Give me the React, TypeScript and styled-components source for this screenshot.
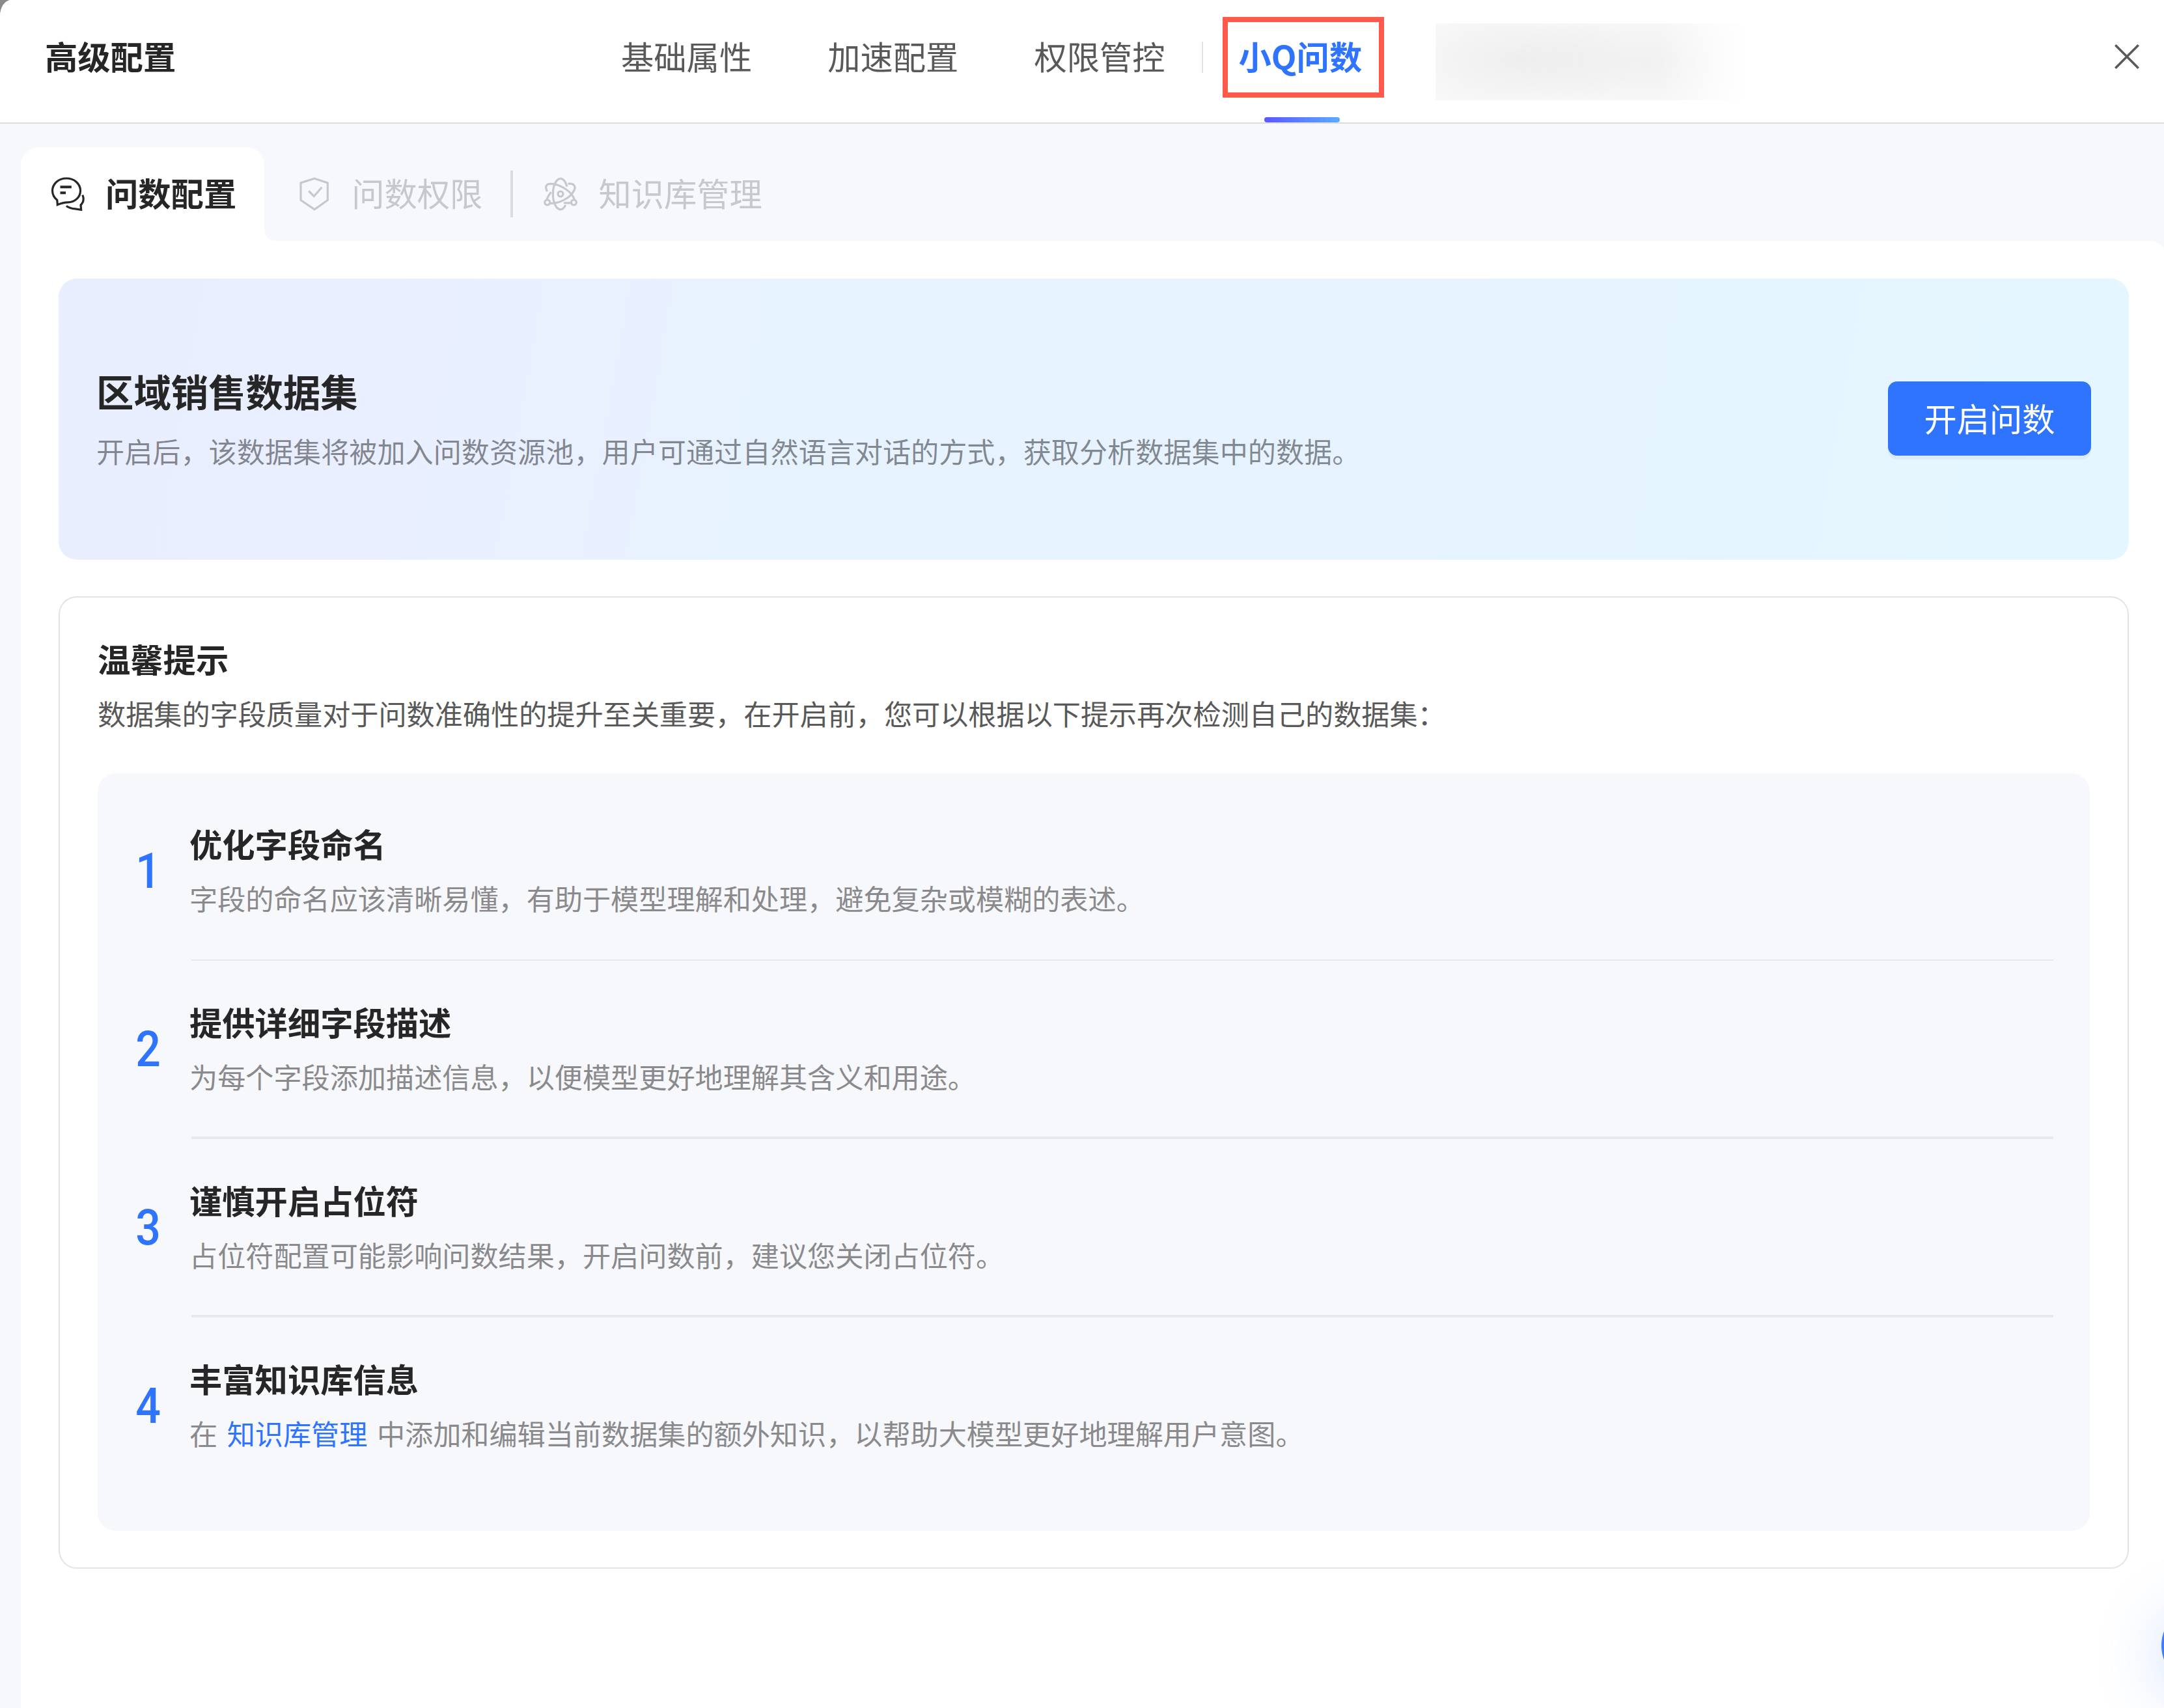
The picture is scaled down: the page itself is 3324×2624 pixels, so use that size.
import { ReactNode, useState } from 'react';
import styled, { createGlobalStyle } from 'styled-components';

const GlobalStyle = createGlobalStyle`
  * {
    box-sizing: border-box;
  }
  body {
    margin: 0;
    background: #8a8a8a;
    color: #262626;
    font-family: 'Noto Sans CJK SC', 'Noto Sans', sans-serif;
    font-size: 50.3px;
    line-height: 70px;
  }
`;

const Drawer = styled.div`
  display: flex;
  flex-direction: column;
  height: 2624px;
  overflow: hidden;
  background: #f7f8fc;
  border-top-left-radius: 17px 25px;
`;

const Header = styled.header`
  display: flex;
  align-items: center;
  flex: none;
  height: 190px;
  padding: 0 38px 18px 69px;
  background: #fff;
  border-bottom: 2px solid #dcdcde;
`;

const Title = styled.h1`
  margin: 0;
  width: 200px;
  font-size: 50.3px;
  font-weight: 600;
  white-space: nowrap;
`;

const Nav = styled.nav`
  display: flex;
  align-items: center;
  gap: 116px;
  margin-left: 685px;
`;

const NavItem = styled.a<{ $active?: boolean }>`
  position: relative;
  display: flex;
  align-items: center;
  height: 170px;
  white-space: nowrap;
  cursor: pointer;
  color: ${({ $active }) => ($active ? '#2e74ff' : '#595959')};
  font-weight: ${({ $active }) => ($active ? 600 : 400)};
  ${({ $active }) =>
    $active &&
    `
    width: 188px;
    &::after {
      content: '';
      position: absolute;
      left: 39px;
      top: 180px;
      width: 116px;
      height: 8px;
      border-radius: 4px;
      background: linear-gradient(90deg, #5b57ff, #5aabff);
    }
  `}
`;

const NavDivider = styled.span`
  width: 2px;
  height: 48px;
  margin: 6px 55px 0 56px;
  background: #e1e1e3;
`;

const Highlight = styled.span`
  position: absolute;
  left: -25px;
  top: 26px;
  width: 248px;
  height: 124px;
  border: 8px solid #ff5a4c;
`;

const Masked = styled.div`
  width: 479px;
  height: 118px;
  margin: 20px 0 0 114px;
  background:
    linear-gradient(90deg, rgba(255, 255, 255, 0) 72%, #fff 100%),
    radial-gradient(ellipse 190px 90px at 120px 56px, rgba(0, 0, 0, 0.045), rgba(0, 0, 0, 0)),
    radial-gradient(ellipse 210px 90px at 320px 58px, rgba(0, 0, 0, 0.035), rgba(0, 0, 0, 0)),
    #f9f9f9;
`;

const Close = styled.button`
  display: flex;
  margin: 4px 0 0 auto;
  padding: 0;
  border: 0;
  background: none;
  cursor: pointer;
`;

const SubTabs = styled.div`
  display: flex;
  flex: none;
  height: 180px;
  padding: 36px 0 0 32px;
`;

const SubTab = styled.div<{ $active?: boolean }>`
  position: relative;
  display: flex;
  align-items: center;
  gap: 32px;
  height: 144px;
  padding: 0 43px 7px 50px;
  white-space: nowrap;
  color: #c6c8cd;
  svg {
    flex: none;
    margin-top: 6px;
  }
  ${({ $active }) =>
    $active &&
    `
    padding-left: 46px;
    color: #262626;
    font-weight: 600;
    background: #fff;
    border-radius: 28px 28px 0 0;
    &::after {
      content: '';
      position: absolute;
      right: -16px;
      bottom: 0;
      width: 16px;
      height: 16px;
      background: radial-gradient(circle at 100% 0, transparent 15.5px, #fff 16px);
    }
  `}
`;

const SubTabDivider = styled.span`
  width: 4px;
  height: 72px;
  margin: 36px -3px 0 0;
  background: #dbdcdf;
`;

const Panel = styled.main`
  flex: 1;
  margin-left: 32px;
  padding: 58px 54px 0 58px;
  background: #fff;
  border-top-right-radius: 24px 16px;
`;

const Banner = styled.section`
  display: flex;
  align-items: center;
  justify-content: space-between;
  height: 432px;
  padding: 0 58px;
  border-radius: 28px;
  background: linear-gradient(100deg, #e9eeff 0%, #e9f0ff 26%, #e7f2ff 34%, #e6f3ff 65%, #e4f5ff 85%, #e4f6ff 100%);
`;

const BannerText = styled.div`
  padding-bottom: 4px;
`;

const BannerTitle = styled.h2`
  margin: 0 0 20px;
  font-size: 57.4px;
  line-height: 80px;
  font-weight: 600;
`;

const BannerDesc = styled.p`
  margin: 0;
  font-size: 43.15px;
  line-height: 64px;
  color: rgba(0, 0, 0, 0.45);
`;

const StartButton = styled.button`
  width: 312px;
  height: 114px;
  margin-bottom: 2px;
  padding: 0 0 4px;
  border: 0;
  border-radius: 14px;
  background: #2e74ff;
  box-shadow: 0 6px 0 rgba(0, 0, 0, 0.04);
  color: #fff;
  font-family: inherit;
  font-size: 50.3px;
  line-height: 70px;
  cursor: pointer;
`;

const Card = styled.section`
  margin-top: 56px;
  padding: 58px 58px 56px;
  border: 2px solid #e3e3e3;
  border-radius: 28px;
`;

const CardTitle = styled.h3`
  margin: 0;
  font-size: 50.3px;
  font-weight: 600;
`;

const CardDesc = styled.p`
  margin: 19px 0 63px;
  font-size: 43.15px;
  line-height: 60px;
  color: #595959;
`;

const TipList = styled.div`
  height: 1164px;
  padding: 14px 56px 0 0;
  border-radius: 28px;
  background: #f7f8fc;
`;

const Tip = styled.div`
  display: flex;
  align-items: center;
  padding-top: 58px;
`;

const TipNumber = styled.span`
  width: 53px;
  margin: 4px 37px 0 51px;
  font-family: Roboto, sans-serif;
  font-size: 75.5px;
  font-weight: 500;
  line-height: 80px;
  text-align: center;
  color: #2e74ff;
  transform: scaleX(0.9);
`;

const TipTitle = styled.h4`
  margin: 0 0 19px;
  font-size: 50.3px;
  font-weight: 600;
`;

const TipDesc = styled.p`
  margin: 0 0 2px;
  font-size: 43.15px;
  line-height: 60px;
  color: #8a8a8c;
  a {
    margin: 0 14.5px;
    color: #2e74ff;
  }
`;

const TipDivider = styled.hr<{ $size: number }>`
  height: ${({ $size }) => $size}px;
  margin: ${({ $size }) => 65 - $size}px 0 0 144px;
  border: 0;
  background: #e6e8eb;
`;

const Assistant = styled.button`
  position: fixed;
  left: 3320px;
  top: 2466px;
  width: 124px;
  height: 124px;
  padding: 0;
  border: 0;
  border-radius: 50%;
  background: #3d7dff;
  box-shadow: 0 16px 100px rgba(46, 116, 255, 0.25);
`;

const Icon = ({ children }: { children: ReactNode }) => (
  <svg width='52' height='52' viewBox='0 0 52 52' fill='none' stroke='currentColor' strokeWidth='3.2'>
    {children}
  </svg>
);

const ChatIcon = () => (
  <Icon>
    <path d='M10.3 42.6L9.8 35.5C5 31.5 2.5 26.5 2.5 21C2.5 10.2 12 2 24 2S45.5 10.2 45.5 21C45.5 31 37 38.8 26 38.8C20.5 38.8 16 40 10.3 42.6Z' />
    <path d='M14.5 15.3H31.8M14.5 24.3H23' strokeWidth='4' />
    <path d='M48.8 27.5C51.5 34 50 39 46 43L46.6 50.3L37.5 48.8C31.5 48.5 27.5 47 23.8 44.5' />
  </Icon>
);

const ShieldIcon = () => (
  <Icon>
    <path d='M27 2.3L47.3 9V35.5L27 49.7L6 35.5V9Z' />
    <path d='M18.2 21.5L26.3 29.5L38.3 15.8' />
  </Icon>
);

const AtomIcon = () => (
  <Icon>
    <circle cx='26' cy='26' r='4' />
    <circle cx='5.7' cy='39' r='4' />
    <circle cx='46.4' cy='39' r='4' />
    <path d='M36 14.5C33.5 6.3 30 2.3 26 2.3C19.5 2.3 14.3 13 14.3 26S19.5 49.8 26 49.8C29 49.8 31.5 47.5 33.7 43' />
    <path d='M5.6 22C1.5 14.5 4 10.3 11 10.3C24 10.3 44 22 47.3 35' />
    <path d='M37.5 10.3C46.5 9 50.5 14.5 46.3 21.5C41 31.5 25 41 10 40.3' />
    <path d='M4.8 35C6.2 30.5 8.5 26.5 11.5 23M31 39.8H42' />
  </Icon>
);

const navItems = ['基础属性', '加速配置', '权限管控'];

const tips: { title: string; desc: ReactNode }[] = [
  {
    title: '优化字段命名',
    desc: '字段的命名应该清晰易懂，有助于模型理解和处理，避免复杂或模糊的表述。',
  },
  {
    title: '提供详细字段描述',
    desc: '为每个字段添加描述信息，以便模型更好地理解其含义和用途。',
  },
  {
    title: '谨慎开启占位符',
    desc: '占位符配置可能影响问数结果，开启问数前，建议您关闭占位符。',
  },
  {
    title: '丰富知识库信息',
    desc: (
      <>
        在<a>知识库管理</a>中添加和编辑当前数据集的额外知识，以帮助大模型更好地理解用户意图。
      </>
    ),
  },
];

const App = () => {
  const [open, setOpen] = useState(true);

  if (!open) return null;

  return (
    <>
      <GlobalStyle />
      <Drawer lang='zh-CN'>
        <Header>
          <Title>高级配置</Title>
          <Nav>
            {navItems.map((item) => (
              <NavItem key={item}>{item}</NavItem>
            ))}
          </Nav>
          <NavDivider />
          <NavItem $active>
            小Q问数
            <Highlight />
          </NavItem>
          <Masked />
          <Close aria-label='关闭' onClick={() => setOpen(false)}>
            <svg width='38' height='38' viewBox='0 0 38 38' stroke='#595959' strokeWidth='3.6'>
              <path d='M1.3 1.3L36.7 36.7M36.7 1.3L1.3 36.7' />
            </svg>
          </Close>
        </Header>

        <SubTabs>
          <SubTab $active>
            <ChatIcon />
            问数配置
          </SubTab>
          <SubTab>
            <ShieldIcon />
            问数权限
          </SubTab>
          <SubTabDivider />
          <SubTab>
            <AtomIcon />
            知识库管理
          </SubTab>
        </SubTabs>

        <Panel>
          <Banner>
            <BannerText>
              <BannerTitle>区域销售数据集</BannerTitle>
              <BannerDesc>
                开启后，该数据集将被加入问数资源池，用户可通过自然语言对话的方式，获取分析数据集中的数据。
              </BannerDesc>
            </BannerText>
            <StartButton>开启问数</StartButton>
          </Banner>

          <Card>
            <CardTitle>温馨提示</CardTitle>
            <CardDesc>
              数据集的字段质量对于问数准确性的提升至关重要，在开启前，您可以根据以下提示再次检测自己的数据集：
            </CardDesc>
            <TipList>
              {tips.map((tip, i) => (
                <div key={tip.title}>
                  <Tip>
                    <TipNumber>{i + 1}</TipNumber>
                    <div>
                      <TipTitle>{tip.title}</TipTitle>
                      <TipDesc>{tip.desc}</TipDesc>
                    </div>
                  </Tip>
                  {i < tips.length - 1 && <TipDivider $size={i === 0 ? 2 : 4} />}
                </div>
              ))}
            </TipList>
          </Card>
        </Panel>
      </Drawer>
      <Assistant aria-label='小Q' />
    </>
  );
};

export default App;
